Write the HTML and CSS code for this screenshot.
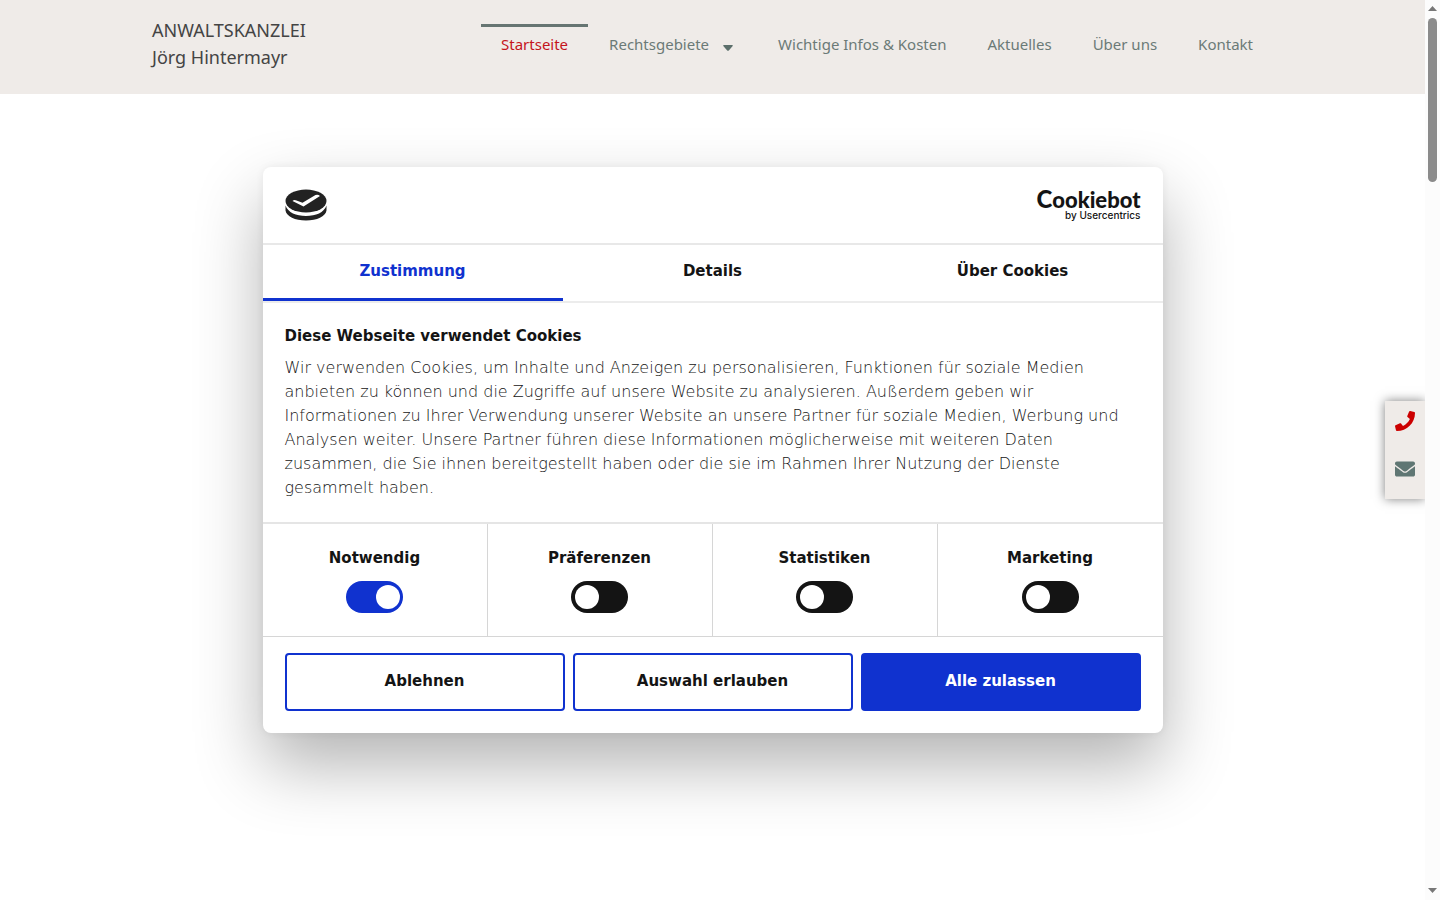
FILE: index.html
```html
<!DOCTYPE html>
<html lang="de">
<head>
<meta charset="utf-8">
<meta name="viewport" content="width=device-width, initial-scale=1">
<title>Anwaltskanzlei Jörg Hintermayr</title>
<link rel="stylesheet" href="styles.css">
</head>
<body>
<div class="page">
  <header class="site-header">
    <a class="brand" href="#">ANWALTSKANZLEI<br>Jörg Hintermayr</a>
    <nav class="main-nav">
      <a class="nav-link active" href="#">Startseite</a>
      <a class="nav-link" href="#">Rechtsgebiete
        <svg class="caret" viewBox="0 0 10 6" aria-hidden="true"><path d="M.8 0h8.400q.8.200.500 1L5.800 5.500q-.8.700-1.600 0L.3 1Q0 .2.800 0z"/></svg>
      </a>
      <a class="nav-link" href="#">Wichtige Infos &amp; Kosten</a>
      <a class="nav-link" href="#">Aktuelles</a>
      <a class="nav-link" href="#">Über uns</a>
      <a class="nav-link" href="#">Kontakt</a>
    </nav>
  </header>

  <aside class="contact-bar">
    <a href="#" aria-label="Telefon"><svg class="phone" viewBox="0 0 512 512"><path d="M493.400 24.600l-104-24c-11.300-2.600-22.900 3.300-27.500 13.900l-48 112c-4.200 9.800-1.400 21.300 6.900 28l60.600 49.600c-36 76.700-98.900 140.500-177.200 177.200l-49.600-60.600c-6.800-8.300-18.200-11.100-28-6.900l-112 48C3.900 366.500-2 378.100.6 389.400l24 104C27.100 504.200 36.700 512 48 512c256.100 0 464-207.500 464-464 0-11.200-7.700-20.900-18.600-23.400z"/></svg></a>
    <a href="#" aria-label="E-Mail"><svg class="mail" viewBox="0 0 512 512"><path d="M502.300 190.800c3.900-3.100 9.700-.2 9.700 4.700V400c0 26.500-21.500 48-48 48H48c-26.500 0-48-21.500-48-48V195.600c0-5 5.700-7.800 9.700-4.700 22.400 17.400 52.100 39.500 154.100 113.600 21.100 15.400 56.700 47.800 92.200 47.600 35.700.3 72-32.800 92.300-47.600 102-74.100 131.600-96.300 154-113.700zM256 320c23.200.4 56.600-29.200 73.400-41.400 132.700-96.300 142.800-104.700 173.400-128.700 5.800-4.500 9.200-11.500 9.200-18.900v-19c0-26.500-21.500-48-48-48H48c-26.500 0-48 21.500-48 48v19c0 7.400 3.400 14.300 9.200 18.900 30.600 23.900 40.700 32.400 173.400 128.700 16.800 12.200 50.200 41.800 73.400 41.400z"/></svg></a>
  </aside>

  <div class="overlay">
    <section class="dialog" role="dialog" aria-labelledby="consent-title">
      <div class="dialog-head">
        <svg class="cookie-logo" viewBox="0 0 42 32" aria-hidden="true">
          <path d="M.5 16.500v5C1.500 27.500 10 31.500 21 31.500s19.500-4 20.500-10v-5C39 23.500 31 27 21 27S3 23.500.5 16.500z" fill="#222"/>
          <ellipse cx="21" cy="12" rx="20.500" ry="11.500" fill="#222"/>
          <path d="M7.500 12q1.500-1.500 4-.5l6 2.300L30.500 6q2.500-1 4.500 1L18.500 17.500z" fill="#fff"/>
        </svg>
        <a class="cookiebot" href="#"><span class="wordmark"><span class="big-c">C</span>ookiebot</span><span class="byline">by Usercentrics</span></a>
      </div>
      <div class="tabs" role="tablist">
        <button class="tab selected" role="tab" aria-selected="true">Zustimmung</button>
        <button class="tab" role="tab" aria-selected="false">Details</button>
        <button class="tab" role="tab" aria-selected="false">Über Cookies</button>
      </div>
      <div class="consent-text">
        <h2 id="consent-title">Diese Webseite verwendet Cookies</h2>
        <p>Wir verwenden Cookies, um Inhalte und Anzeigen zu personalisieren, Funktionen für soziale Medien anbieten zu können und die Zugriffe auf unsere Website zu analysieren. Außerdem geben wir Informationen zu Ihrer Verwendung unserer Website an unsere Partner für soziale Medien, Werbung und Analysen weiter. Unsere Partner führen diese Informationen möglicherweise mit weiteren Daten zusammen, die Sie ihnen bereitgestellt haben oder die sie im Rahmen Ihrer Nutzung der Dienste gesammelt haben.</p>
      </div>
      <div class="options">
        <label class="option">Notwendig<input class="switch necessary" type="checkbox" checked></label>
        <label class="option">Präferenzen<input class="switch" type="checkbox"></label>
        <label class="option">Statistiken<input class="switch" type="checkbox"></label>
        <label class="option">Marketing<input class="switch" type="checkbox"></label>
      </div>
      <div class="actions">
        <button class="action">Ablehnen</button>
        <button class="action">Auswahl erlauben</button>
        <button class="action primary">Alle zulassen</button>
      </div>
    </section>
  </div>
</div>
<div class="scrollbar" aria-hidden="true">
  <svg viewBox="0 0 9 5"><path d="M0 5L4.500 0 9 5z"/></svg>
  <div class="track"><div class="thumb"></div></div>
  <svg viewBox="0 0 9 5"><path d="M0 0h9L4.500 5z"/></svg>
</div>
</body>
</html>
```
FILE: styles.css
```css
* { box-sizing: border-box; }

body {
  margin: 0;
  min-height: 100vh;
  display: flex;
  background: #fff;
  font-family: "DejaVu Sans", sans-serif;
  color: #141414;
}

a { color: inherit; text-decoration: none; }
button { font: inherit; color: inherit; cursor: pointer; }

.page { position: relative; flex: 1; min-width: 0; }

.site-header {
  display: flex;
  justify-content: space-between;
  align-items: flex-start;
  padding: 17px 152px 23px;
  background: #efebe8;
  font-family: "Noto Sans", sans-serif;
}

.brand { font-size: 18px; line-height: 27px; color: #444; }

.main-nav { display: flex; gap: 1px; padding-top: 7px; }

.nav-link {
  display: flex;
  align-items: center;
  gap: 14px;
  padding: 7px 20px 14px;
  border-top: 3px solid transparent;
  font-size: 15px;
  line-height: 20px;
  color: #6b7a77;
  white-space: nowrap;
}

.nav-link.active { border-color: #667572; color: #c4141c; }
.caret { width: 10px; height: 6px; margin: 8px 4px 0 0; fill: #5c6f6b; }

.contact-bar {
  position: absolute;
  right: 0;
  top: 401px;
  display: flex;
  flex-direction: column;
  gap: 28px;
  padding: 10px 10px 20px;
  background: #efebe8;
  box-shadow: 0 0 10px rgba(0, 0, 0, .5);
  clip-path: inset(-20px 0 -20px -20px);
}

.contact-bar svg { display: block; width: 20px; height: 20px; }
.phone { fill: #c00; }
.mail { fill: #5f7673; }

.overlay {
  position: absolute;
  inset: 0;
  display: flex;
  align-items: center;
  justify-content: center;
  pointer-events: none;
}

.dialog {
  width: 900px;
  max-width: 100%;
  background: #fff;
  border-radius: 8px;
  box-shadow: 0 32px 68px rgba(0, 0, 0, .3), 0 0 8px rgba(0, 0, 0, .06);
  font-size: 15px;
  pointer-events: auto;
}

.dialog-head {
  display: flex;
  justify-content: space-between;
  align-items: center;
  height: 78px;
  padding: 0 22px;
  border-bottom: 2px solid #e8e8e8;
}

.cookie-logo { width: 42px; height: 32px; }

.cookiebot { display: flex; flex-direction: column; align-items: flex-end; }
.wordmark { font: 900 22px/18px Lato, sans-serif; }
.big-c { font-size: 24px; }
.byline { font: 500 10px/12px Inter, sans-serif; }

.tabs { display: flex; border-bottom: 2px solid #ececec; }

.tab {
  flex: 1;
  height: 56px;
  padding: 0 0 4px;
  border: 0;
  background: none;
  font-weight: 700;
}

.tab.selected { color: #1032cf; box-shadow: inset 0 -3px #1032cf; }

.consent-text { padding: 21px 22px 22px; line-height: 24px; }
.consent-text h2 { margin: 0 0 8px; font-size: 15px; font-weight: 700; line-height: 24px; }
.consent-text p { margin: 0; font-size: 16px; font-weight: 200; }

.options {
  display: grid;
  grid-template-columns: repeat(4, 1fr);
  border-top: 2px solid #e5e5e5;
  border-bottom: 1px solid #d6d6d6;
}

.option {
  display: flex;
  flex-direction: column;
  align-items: center;
  gap: 11px;
  padding: 22px 0 23px;
  font-weight: 700;
  line-height: 24px;
  border-right: 1px solid #d6d6d6;
}

.option:last-child { border-right: 0; }

.switch {
  appearance: none;
  display: flex;
  align-items: center;
  width: 57px;
  height: 32px;
  margin: 0;
  padding: 0 4px;
  border-radius: 16px;
  background: #141414;
}

.switch::before {
  content: "";
  width: 24px;
  height: 24px;
  border-radius: 50%;
  background: #fff;
}

.switch:checked { justify-content: flex-end; padding-right: 3px; background: #1032cf; }

.actions { display: flex; gap: 8px; padding: 16px 22px 22px; }

.action {
  flex: 1;
  height: 58px;
  padding: 0 0 2px;
  border: 2px solid #1032cf;
  border-radius: 4px;
  background: #fff;
  font-weight: 700;
}

.action.primary { background: #1032cf; color: #fff; }

.scrollbar {
  display: flex;
  flex-direction: column;
  align-items: center;
  gap: 7px;
  width: 15px;
  padding: 6px 0 7px;
  background: #fcfcfc;
}

.scrollbar svg { width: 9px; height: 5px; fill: #777; }
.track { flex: 1; }
.thumb { width: 9px; height: 164px; border-radius: 5px; background: #8b8b8b; }
```
